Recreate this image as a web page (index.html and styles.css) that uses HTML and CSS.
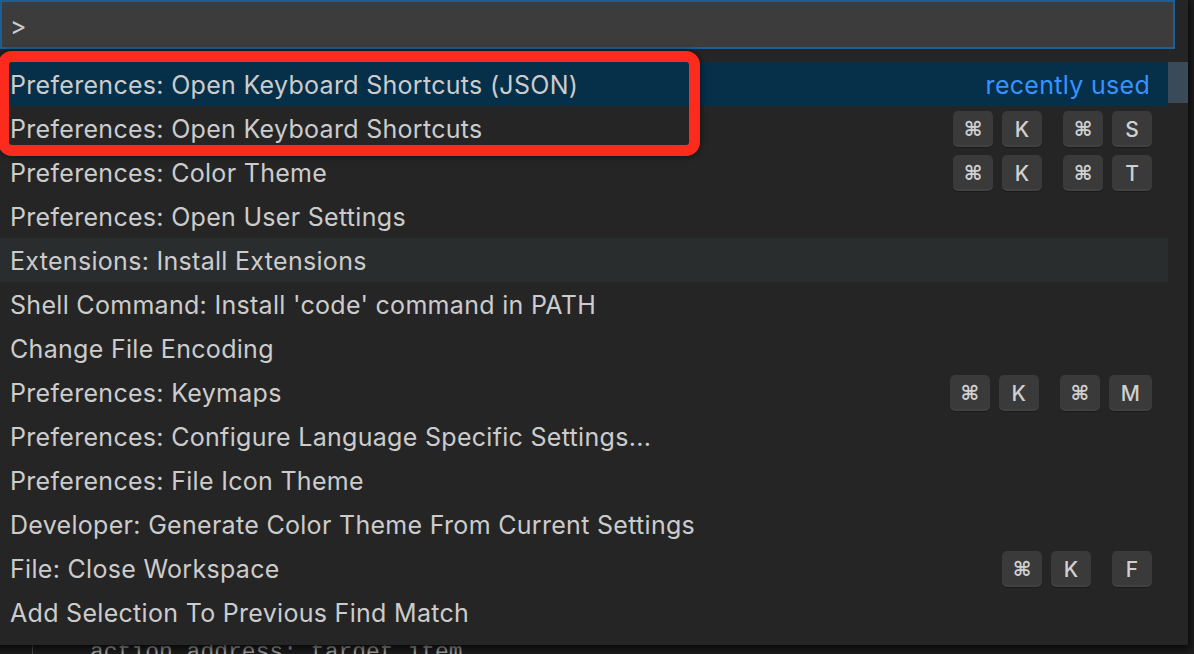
FILE: index.html
```html
<!DOCTYPE html>
<html>
<head>
<meta charset="utf-8">
<link rel="stylesheet" href="styles.css">
</head>
<body>
<div class="editor">
  <div class="code-line"><span class="guide"></span><span class="code">action address: target item</span></div>
</div>
<div class="quick-open">
  <div class="input-wrap"><div class="input">&gt;</div></div>
  <div class="list-area">
    <div class="list">
      <div class="row selected"><span class="label">Preferences: Open Keyboard Shortcuts (JSON)</span><span class="recent">recently used</span></div>
      <div class="row"><span class="label">Preferences: Open Keyboard Shortcuts</span><span class="keys"><span class="chord"><span class="key cmd">⌘</span><span class="key">K</span></span><span class="chord"><span class="key cmd">⌘</span><span class="key">S</span></span></span></div>
      <div class="row"><span class="label">Preferences: Color Theme</span><span class="keys"><span class="chord"><span class="key cmd">⌘</span><span class="key">K</span></span><span class="chord"><span class="key cmd">⌘</span><span class="key">T</span></span></span></div>
      <div class="row"><span class="label">Preferences: Open User Settings</span></div>
      <div class="row hover"><span class="label">Extensions: Install Extensions</span></div>
      <div class="row"><span class="label">Shell Command: Install 'code' command in PATH</span></div>
      <div class="row"><span class="label">Change File Encoding</span></div>
      <div class="row"><span class="label">Preferences: Keymaps</span><span class="keys"><span class="chord"><span class="key cmd">⌘</span><span class="key">K</span></span><span class="chord"><span class="key cmd">⌘</span><span class="key">M</span></span></span></div>
      <div class="row"><span class="label">Preferences: Configure Language Specific Settings...</span></div>
      <div class="row"><span class="label">Preferences: File Icon Theme</span></div>
      <div class="row"><span class="label">Developer: Generate Color Theme From Current Settings</span></div>
      <div class="row"><span class="label">File: Close Workspace</span><span class="keys"><span class="chord"><span class="key cmd">⌘</span><span class="key">K</span></span><span class="chord"><span class="key">F</span></span></span></div>
      <div class="row"><span class="label">Add Selection To Previous Find Match</span></div>
    </div>
    <div class="scrollbar"><div class="slider"></div></div>
  </div>
  <div class="annotation"></div>
</div>
</body>
</html>
```

FILE: styles.css
```css
html, body {
  margin: 0;
  padding: 0;
}
body {
  width: 1194px;
  height: 654px;
  overflow: hidden;
  background: #1e1e1e;
  position: relative;
  font-family: "Inter", "Noto Sans", "DejaVu Sans", sans-serif;
  color: #cccccc;
}
.editor {
  height: 654px;
  box-sizing: border-box;
  padding-top: 639px;
  overflow: hidden;
}
.code-line {
  display: flex;
  align-items: stretch;
  height: 28px;
  line-height: 28px;
  font-family: "Liberation Mono", "DejaVu Sans Mono", monospace;
  font-size: 23px;
  color: #a9a9a9;
}
.guide {
  width: 1px;
  margin-left: 32px;
  background: #505050;
}
.code {
  margin-left: 57px;
  white-space: pre;
}
.quick-open {
  position: absolute;
  left: -12px;
  top: 0;
  width: 1200px;
  background: #252526;
  box-shadow: 0 2px 8px 2px rgba(0, 0, 0, 0.75);
  padding-bottom: 11px;
}
.input-wrap {
  padding: 0 13px 0 12px;
}
.input {
  height: 49px;
  box-sizing: border-box;
  border: 2px solid #1c5f96;
  background: #3c3c3c;
  padding-left: 8px;
  font-size: 25px;
  line-height: 49px;
  color: #cccccc;
}
.list-area {
  display: flex;
  margin-top: 13px;
}
.list {
  flex: 1;
  display: flex;
  flex-direction: column;
}
.row {
  height: 44px;
  box-sizing: border-box;
  display: flex;
  align-items: center;
  justify-content: space-between;
  padding: 2px 16px 0 22px;
  font-size: 25px;
  letter-spacing: 0.3px;
  white-space: nowrap;
}
.row.selected {
  background: #062f4a;
}
.row.hover {
  background: #2a2d2e;
}
.recent {
  color: #3794ff;
  margin-right: 2px;
}
.keys {
  display: flex;
  gap: 21px;
  letter-spacing: 0;
}
.chord {
  display: flex;
  gap: 9px;
}
.key {
  display: flex;
  align-items: center;
  justify-content: center;
  box-sizing: border-box;
  min-width: 40px;
  height: 36px;
  padding: 0 12px;
  border-radius: 5px;
  background: #3a3a3b;
  box-shadow: inset 0 -2px 0 rgba(255, 255, 255, 0.04), 0 1px 0 rgba(0, 0, 0, 0.25);
  font-size: 21px;
  font-weight: 500;
  color: #d0d0d0;
}
.key.cmd {
  font-family: "DejaVu Sans", sans-serif;
  font-weight: bold;
  font-size: 20px;
  padding: 0 10px;
}
.scrollbar {
  width: 20px;
}
.slider {
  height: 41px;
  background: #3a4a58;
}
.annotation {
  position: absolute;
  left: 10px;
  top: 51px;
  width: 702px;
  height: 105px;
  box-sizing: border-box;
  border: 11px solid #fc2b1d;
  border-radius: 14px;
  box-shadow: 0 0 6px rgba(0, 0, 0, 0.6);
}
```
